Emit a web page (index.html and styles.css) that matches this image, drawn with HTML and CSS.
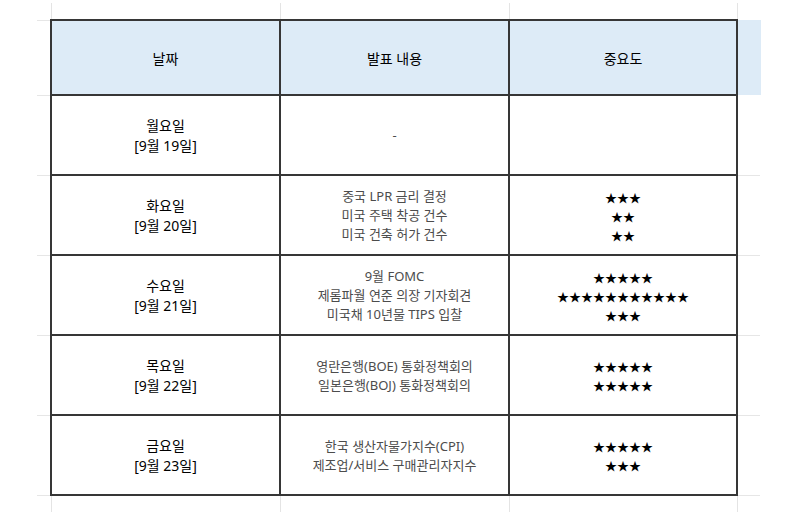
FILE: index.html
```html
<!DOCTYPE html>
<html lang="ko">
<head>
<meta charset="utf-8">
<title>주간 일정</title>
<link rel="stylesheet" href="styles.css">
</head>
<body>
<div class="sheet">
  <div class="edge edge-top"><span></span><span></span><span class="last"></span></div>
  <div class="main">
    <div class="stub-left">
      <div class="seg seg-head"></div>
      <div class="seg"></div>
      <div class="seg"></div>
      <div class="seg"></div>
      <div class="seg"></div>
      <div class="seg"></div>
      <div class="seg seg-end"></div>
    </div>
    <div class="grid">
      <div class="cell head">날짜</div>
      <div class="cell head">발표 내용</div>
      <div class="cell head">중요도</div>

      <div class="cell date">월요일<br>[9월 19일]</div>
      <div class="cell info">-</div>
      <div class="cell stars"></div>

      <div class="cell date">화요일<br>[9월 20일]</div>
      <div class="cell info">중국 LPR 금리 결정<br>미국 주택 착공 건수<br>미국 건축 허가 건수</div>
      <div class="cell stars">★★★<br>★★<br>★★</div>

      <div class="cell date">수요일<br>[9월 21일]</div>
      <div class="cell info">9월 FOMC<br>제롬파월 연준 의장 기자회견<br>미국채 10년물 TIPS 입찰</div>
      <div class="cell stars">★★★★★<br>★★★★★★★★★★★<br>★★★</div>

      <div class="cell date">목요일<br>[9월 22일]</div>
      <div class="cell info">영란은행(BOE) 통화정책회의<br>일본은행(BOJ) 통화정책회의</div>
      <div class="cell stars">★★★★★<br>★★★★★</div>

      <div class="cell date">금요일<br>[9월 23일]</div>
      <div class="cell info">한국 생산자물가지수(CPI)<br>제조업/서비스 구매관리자지수</div>
      <div class="cell stars">★★★★★<br>★★★</div>
    </div>
    <div class="stub-right">
      <div class="fill"></div>
      <div class="rseg rseg-first"></div>
      <div class="rseg"></div>
      <div class="rseg"></div>
      <div class="rseg"></div>
      <div class="rseg"></div>
      <div class="rseg rseg-end"></div>
    </div>
  </div>
  <div class="edge edge-bottom"><span></span><span></span><span class="last"></span></div>
</div>
</body>
</html>
```
FILE: styles.css
```css
* { box-sizing: border-box; }

html, body {
  margin: 0;
  padding: 0;
  background: #ffffff;
}

body {
  font-family: "Noto Sans", "Noto Sans CJK KR", sans-serif;
  width: 800px;
  height: 514px;
  overflow: hidden;
}

.sheet {
  padding-top: 3px;
}

.edge {
  display: flex;
  margin-left: 51px;
  height: 16px;
}

.edge span {
  width: 229px;
  border-left: 1px solid #e4e4e4;
}

.edge span.last {
  border-right: 1px solid #e4e4e4;
}

.main {
  display: flex;
  align-items: flex-start;
}

.stub-left {
  width: 50px;
  padding-left: 37px;
  padding-top: 1px;
}

.seg {
  height: 80px;
  border-top: 1px solid #e6e6e6;
}

.seg-head { height: 75px; }
.seg-end { height: 1px; }

.grid {
  width: 688px;
  display: grid;
  grid-template-columns: 227px 227px 226px;
  grid-template-rows: 73px repeat(5, 78px);
  gap: 2px;
  padding: 2px;
  background: #363636;
}

.cell {
  background: #ffffff;
  display: flex;
  align-items: center;
  justify-content: center;
  text-align: center;
}

.head {
  background: #ddebf7;
  font-size: 14px;
  color: #000000;
  padding-top: 1px;
}

.date {
  font-size: 14px;
  line-height: 20px;
  color: #000000;
  padding-top: 1px;
}

.info {
  font-size: 13px;
  line-height: 19px;
  color: #4c4c4c;
  padding-top: 1px;
}

.stars {
  font-family: "Noto Sans CJK KR", sans-serif;
  font-size: 12px;
  line-height: 19px;
  color: #000000;
  padding-top: 2px;
}

.stub-right {
  width: 62px;
  padding-top: 1px;
}

.fill {
  width: 23px;
  height: 75px;
  background: #ddebf7;
}

.rseg {
  width: 22px;
  height: 80px;
  border-top: 1px solid #e6e6e6;
}

.rseg-first { border-top: 0; }
.rseg-end { height: 1px; }
```
